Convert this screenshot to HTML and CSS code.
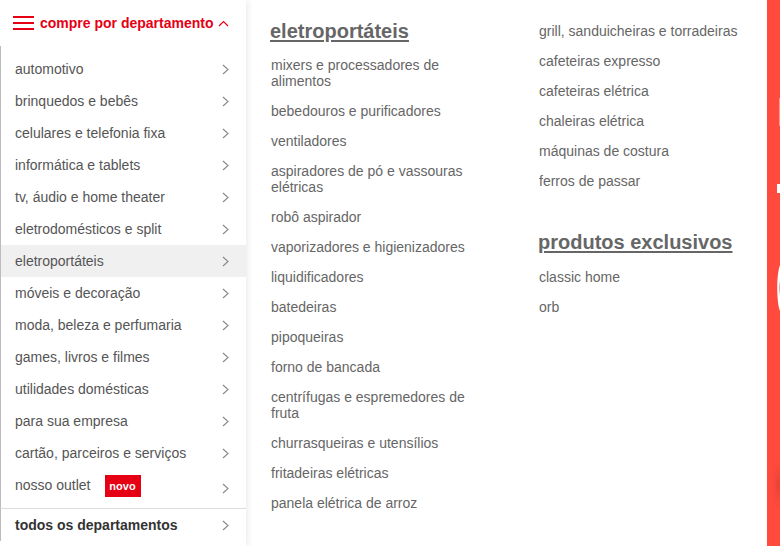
FILE: index.html
```html
<!DOCTYPE html>
<html lang="pt-BR">
<head>
<meta charset="utf-8">
<title>compre por departamento</title>
<link rel="stylesheet" href="styles.css">
</head>
<body>
<div class="page">
  <aside class="side">
    <div class="side-head">
      <svg class="burger" width="21" height="15" viewBox="0 0 21 15"><rect x="0" y="0" width="21" height="2" fill="#e60014"/><rect x="0" y="6" width="21" height="2" fill="#e60014"/><rect x="0" y="12" width="21" height="2" fill="#e60014"/></svg>
      <span class="side-title">compre por departamento</span>
      <svg class="up" width="11" height="7" viewBox="0 0 11 7"><polyline points="1,6 5.5,1.5 10,6" fill="none" stroke="#e60014" stroke-width="1.2"/></svg>
    </div>
    <ul class="dept">
      <li class="dept-item"><span>automotivo</span><svg class="chev" width="7" height="11" viewBox="0 0 7 11"><polyline points="1,1 6,5.5 1,10" fill="none" stroke="#888" stroke-width="1.1"/></svg></li>
      <li class="dept-item"><span>brinquedos e bebês</span><svg class="chev" width="7" height="11" viewBox="0 0 7 11"><polyline points="1,1 6,5.5 1,10" fill="none" stroke="#888" stroke-width="1.1"/></svg></li>
      <li class="dept-item"><span>celulares e telefonia fixa</span><svg class="chev" width="7" height="11" viewBox="0 0 7 11"><polyline points="1,1 6,5.5 1,10" fill="none" stroke="#888" stroke-width="1.1"/></svg></li>
      <li class="dept-item"><span>informática e tablets</span><svg class="chev" width="7" height="11" viewBox="0 0 7 11"><polyline points="1,1 6,5.5 1,10" fill="none" stroke="#888" stroke-width="1.1"/></svg></li>
      <li class="dept-item"><span>tv, áudio e home theater</span><svg class="chev" width="7" height="11" viewBox="0 0 7 11"><polyline points="1,1 6,5.5 1,10" fill="none" stroke="#888" stroke-width="1.1"/></svg></li>
      <li class="dept-item"><span>eletrodomésticos e split</span><svg class="chev" width="7" height="11" viewBox="0 0 7 11"><polyline points="1,1 6,5.5 1,10" fill="none" stroke="#888" stroke-width="1.1"/></svg></li>
      <li class="dept-item active"><span>eletroportáteis</span><svg class="chev" width="7" height="11" viewBox="0 0 7 11"><polyline points="1,1 6,5.5 1,10" fill="none" stroke="#888" stroke-width="1.1"/></svg></li>
      <li class="dept-item"><span>móveis e decoração</span><svg class="chev" width="7" height="11" viewBox="0 0 7 11"><polyline points="1,1 6,5.5 1,10" fill="none" stroke="#888" stroke-width="1.1"/></svg></li>
      <li class="dept-item"><span>moda, beleza e perfumaria</span><svg class="chev" width="7" height="11" viewBox="0 0 7 11"><polyline points="1,1 6,5.5 1,10" fill="none" stroke="#888" stroke-width="1.1"/></svg></li>
      <li class="dept-item"><span>games, livros e filmes</span><svg class="chev" width="7" height="11" viewBox="0 0 7 11"><polyline points="1,1 6,5.5 1,10" fill="none" stroke="#888" stroke-width="1.1"/></svg></li>
      <li class="dept-item"><span>utilidades domésticas</span><svg class="chev" width="7" height="11" viewBox="0 0 7 11"><polyline points="1,1 6,5.5 1,10" fill="none" stroke="#888" stroke-width="1.1"/></svg></li>
      <li class="dept-item"><span>para sua empresa</span><svg class="chev" width="7" height="11" viewBox="0 0 7 11"><polyline points="1,1 6,5.5 1,10" fill="none" stroke="#888" stroke-width="1.1"/></svg></li>
      <li class="dept-item"><span>cartão, parceiros e serviços</span><svg class="chev" width="7" height="11" viewBox="0 0 7 11"><polyline points="1,1 6,5.5 1,10" fill="none" stroke="#888" stroke-width="1.1"/></svg></li>
      <li class="dept-item outlet"><span class="outlet-label"><span>nosso outlet</span><span class="badge">novo</span></span><svg class="chev chev-low" width="7" height="11" viewBox="0 0 7 11"><polyline points="1,1 6,5.5 1,10" fill="none" stroke="#888" stroke-width="1.1"/></svg></li>
    </ul>
    <div class="dept-all"><span>todos os departamentos</span><svg class="chev" width="7" height="11" viewBox="0 0 7 11"><polyline points="1,1 6,5.5 1,10" fill="none" stroke="#888" stroke-width="1.1"/></svg></div>
  </aside>

  <section class="mega">
    <div class="col">
      <h2 class="col-title">eletroportáteis</h2>
      <ul class="links">
        <li>mixers e processadores de alimentos</li>
        <li>bebedouros e purificadores</li>
        <li>ventiladores</li>
        <li>aspiradores de pó e vassouras elétricas</li>
        <li>robô aspirador</li>
        <li>vaporizadores e higienizadores</li>
        <li>liquidificadores</li>
        <li>batedeiras</li>
        <li>pipoqueiras</li>
        <li>forno de bancada</li>
        <li>centrífugas e espremedores de fruta</li>
        <li>churrasqueiras e utensílios</li>
        <li>fritadeiras elétricas</li>
        <li>panela elétrica de arroz</li>
      </ul>
    </div>
    <div class="col col-2">
      <ul class="links">
        <li>grill, sanduicheiras e torradeiras</li>
        <li>cafeteiras expresso</li>
        <li>cafeteiras elétrica</li>
        <li>chaleiras elétrica</li>
        <li>máquinas de costura</li>
        <li>ferros de passar</li>
      </ul>
      <h2 class="col-title col-title-2">produtos exclusivos</h2>
      <ul class="links">
        <li>classic home</li>
        <li>orb</li>
      </ul>
    </div>
  </section>

  <div class="banner">
    <svg width="14" height="546" viewBox="0 0 14 546">
      <defs>
        <radialGradient id="sh" cx="0.5" cy="0.5" r="0.5">
          <stop offset="0" stop-color="#d63a30" stop-opacity="0.6"/>
          <stop offset="1" stop-color="#ff4a3d" stop-opacity="0"/>
        </radialGradient>
      </defs>
      <rect width="14" height="546" fill="#ff4a3d"/>
      <rect x="12.5" y="98" width="1.5" height="28" fill="#fff" opacity="0.8"/>
      <rect x="10" y="184" width="4" height="9" fill="#fff"/>
      <path d="M14 263 C9 270 9 306 14 313 L14 300 C12 294 12 282 14 276 Z" fill="#fff"/>
      <ellipse cx="12" cy="485" rx="10" ry="30" fill="url(#sh)"/>
    </svg>
  </div>
</div>
</body>
</html>
```

FILE: styles.css
```css
* {
  box-sizing: border-box;
}

html, body {
  margin: 0;
  padding: 0;
  background: #fff;
}

body {
  font-family: "Liberation Sans", Arial, sans-serif;
  font-size: 14px;
  color: #666;
}

ul {
  list-style: none;
  margin: 0;
  padding: 0;
}

h2 {
  margin: 0;
}

.page {
  display: flex;
  width: 780px;
  height: 546px;
  overflow: hidden;
}

/* left department list */
.side {
  width: 246px;
  flex: 0 0 246px;
  background: #fff;
  position: relative;
  z-index: 2;
  box-shadow: 2px 0 6px rgba(0, 0, 0, 0.08);
  display: flex;
  flex-direction: column;
}

.side-head {
  height: 46px;
  display: flex;
  align-items: center;
  padding-left: 13px;
}

.burger {
  display: block;
  margin-top: 1px;
}

.side-title {
  margin-left: 6px;
  font-weight: bold;
  color: #e60014;
  font-size: 14px;
  line-height: 16px;
}

.up {
  display: block;
  margin-left: 5px;
  margin-top: 1px;
}

.dept {
  padding-top: 7px;
  border-left: 1px solid #bbb;
}

.dept-item {
  height: 32px;
  display: flex;
  align-items: center;
  justify-content: space-between;
  padding: 0 17px 0 14px;
  color: #555;
  line-height: 16px;
}

.dept-item.active {
  background: #f0f0f0;
}

.chev {
  display: block;
  flex: 0 0 auto;
}

.outlet {
  height: 39px;
  align-items: flex-start;
  padding-top: 8px;
}

.outlet-label {
  display: flex;
  align-items: flex-start;
}

.badge {
  margin-left: 14px;
  width: 36px;
  height: 22px;
  margin-top: -2px;
  background: #e60014;
  color: #fff;
  font-weight: bold;
  font-size: 11px;
  display: flex;
  align-items: center;
  justify-content: center;
}

.chev-low {
  margin-top: 6px;
}

.dept-all {
  border-top: 1px solid #ddd;
  border-left: 1px solid #bbb;
  height: 33px;
  display: flex;
  align-items: center;
  justify-content: space-between;
  padding: 0 17px 0 14px;
  font-weight: bold;
  color: #333;
}

/* mega menu */
.mega {
  flex: 1 1 auto;
  display: flex;
  gap: 48px;
  padding: 16px 0 0 25px;
  background: #fff;
}

.col {
  width: 220px;
  flex: 0 0 220px;
}

.col-2 {
  width: 228px;
  flex: 0 0 228px;
}

.col-title {
  font-size: 20px;
  line-height: 30px;
  font-weight: bold;
  color: #666;
  text-decoration: underline;
  text-decoration-thickness: 2px;
  text-underline-offset: 2px;
  margin-bottom: 4px;
  margin-left: -1px;
}

.col-title-2 {
  margin-top: 31px;
  margin-bottom: 5px;
}

.links li {
  padding: 7px 0;
  line-height: 16px;
  color: #666;
}

/* background banner peeking out */
.banner {
  width: 14px;
  flex: 0 0 14px;
}

.banner svg {
  display: block;
}
```
